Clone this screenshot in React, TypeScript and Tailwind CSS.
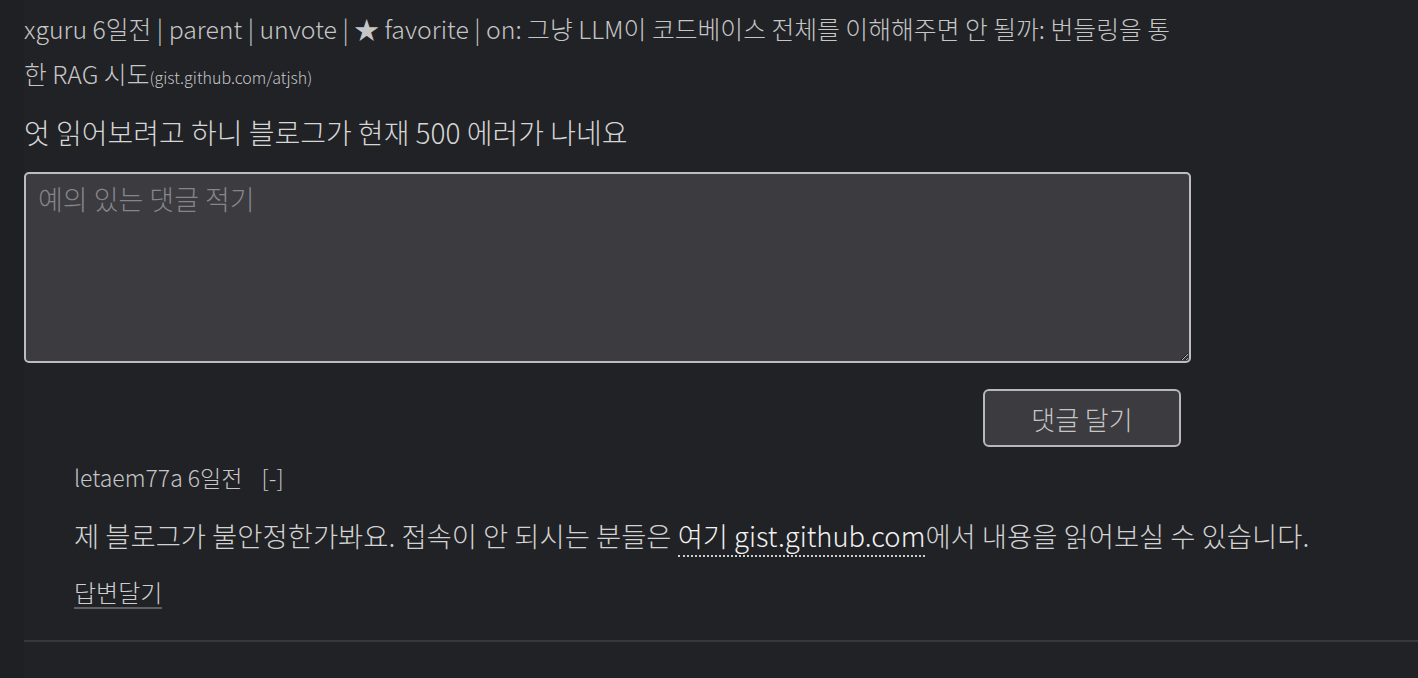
import React from "react";

export default function App() {
  const font = { fontFamily: '"Noto Sans CJK KR", "Noto Sans", sans-serif' };
  return (
    <div className="min-h-[678px] w-full bg-[#212226] overflow-hidden flex" style={font}>
      <div className="w-[24px] shrink-0 bg-[#1f2023]" />
      <div className="flex-1 pt-[6px]">
        <div className="w-[1167px] text-[24.8px] leading-[45px] text-[#c6c6c6] font-light">
          xguru 6일전 | parent | unvote | ★ favorite | on: 그냥 LLM이 코드베이스 전체를 이해해주면 안 될까: 번들링을 통한 RAG 시도<span className="text-[16px] leading-[20px]">(gist.github.com/atjsh)</span>
        </div>
        <p className="mt-[18px] text-[28px] leading-[36px] text-[#d6d6d6] font-light">엇 읽어보려고 하니 블로그가 현재 500 에러가 나네요</p>
        <div className="mt-[22px] w-[1167px]">
          <textarea
            placeholder="예의 있는 댓글 적기"
            className="block w-full h-[191px] rounded-[5px] border-2 border-[#bdbdbd] bg-[#3b3b40] px-[12px] py-[6px] text-[27px] leading-[38px] text-[#d0d0d0] placeholder:text-[#85858a] font-light outline-none resize-y"
            style={font}
          />
          <div className="flex justify-end pr-[10px] mt-[26px]">
            <button className="w-[198px] h-[58px] rounded-[6px] border-2 border-[#b8b8b8] bg-[#3b3b40] text-[26px] text-[#c6c6c6] font-light" style={font}>댓글 달기</button>
          </div>
        </div>
        <div className="pl-[50px] mt-[15px]">
          <div className="text-[23px] leading-[30px] text-[#c6c6c6] font-light">letaem77a 6일전 <span className="ml-[14px]">[-]</span></div>
          <p className="mt-[25px] text-[27.4px] leading-[36px] text-[#d2d2d2] font-light">
            제 블로그가 불안정한가봐요. 접속이 안 되시는 분들은{" "}
            <a className="text-[#f2f2f2] border-b-2 border-dotted border-[#cfcfcf]">여기 gist.github.com</a>에서 내용을 읽어보실 수 있습니다.
          </p>
          <div className="mt-[24px]">
            <span className="inline-block text-[24px] leading-[30px] text-[#cfcfcf] font-light border-b-2 border-[#606064]">답변달기</span>
          </div>
        </div>
        <div className="mt-[31px] h-[2px] bg-[#37383c]" />
      </div>
    </div>
  );
}
